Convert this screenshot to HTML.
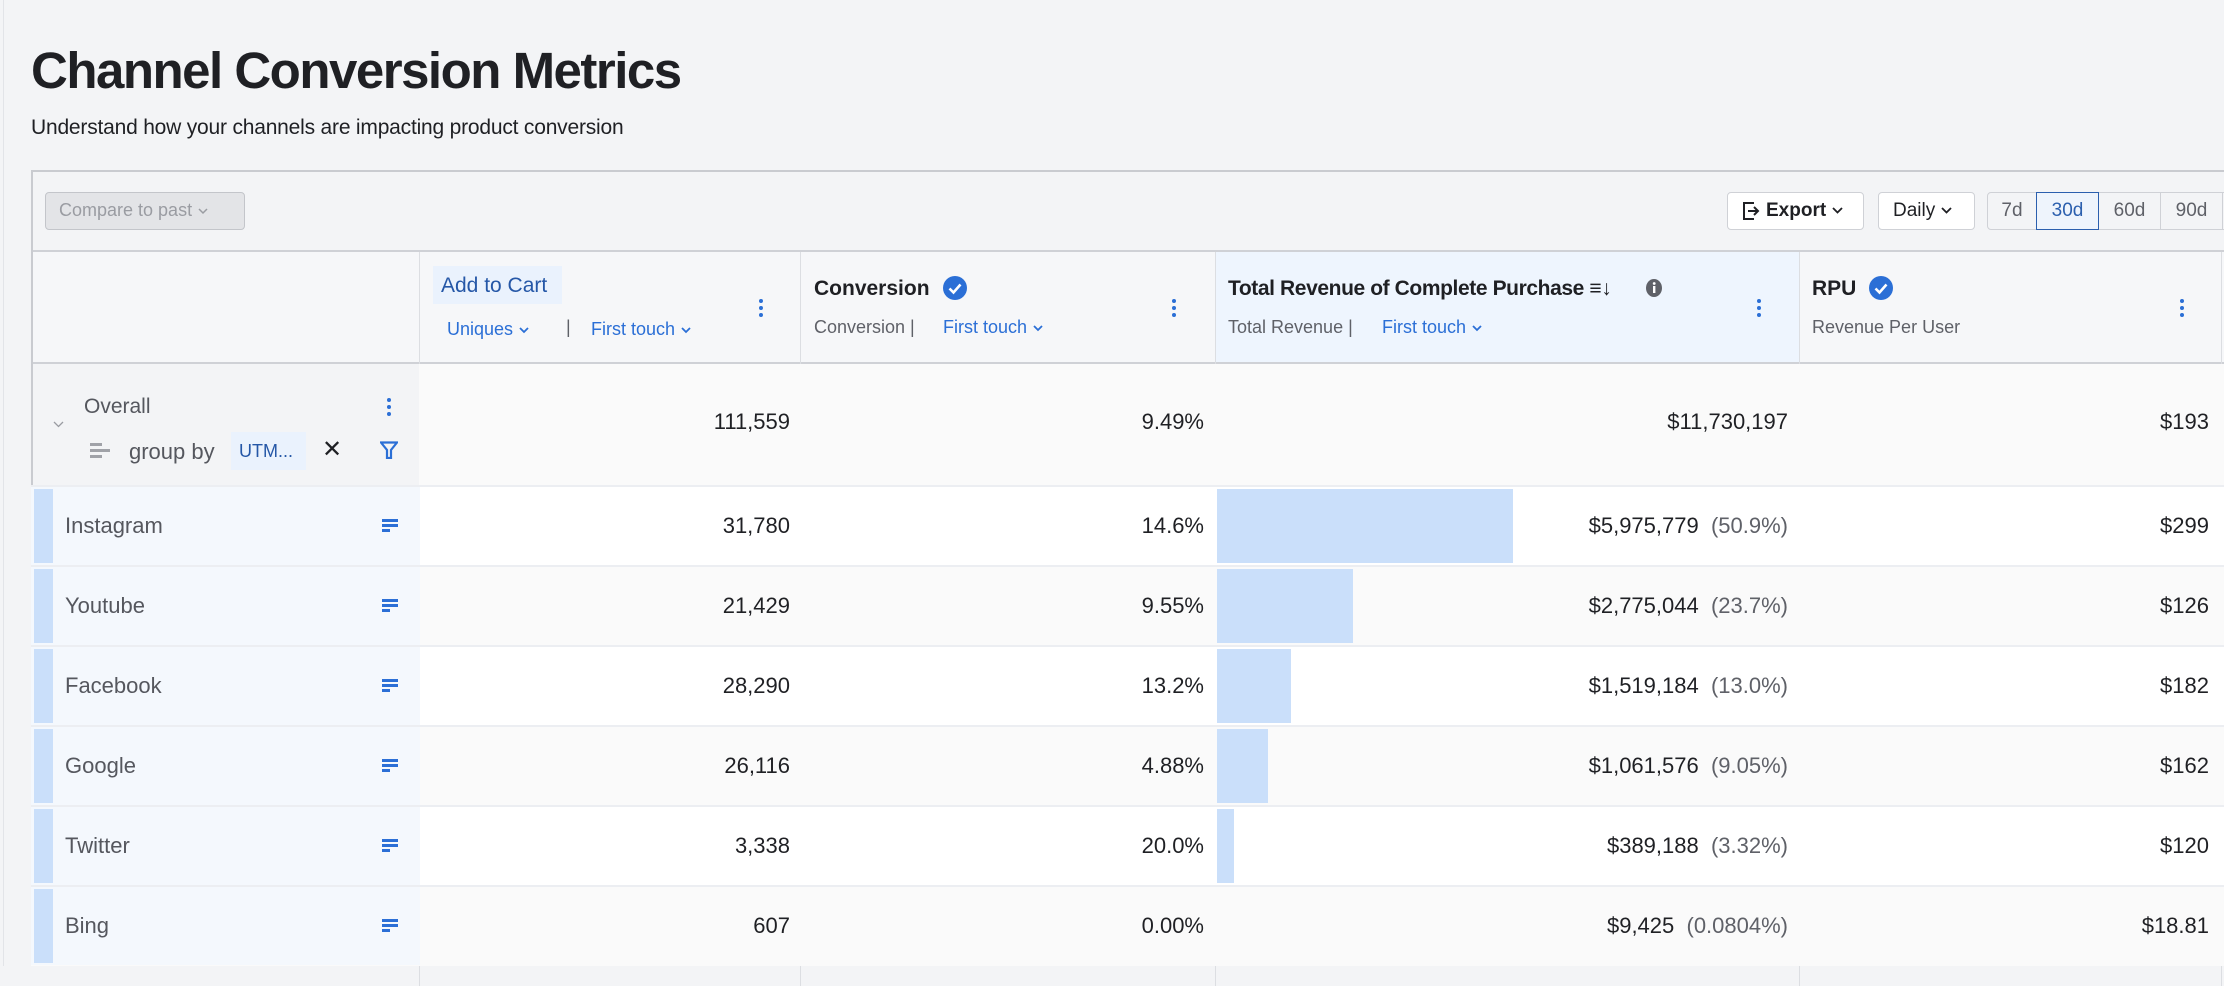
<!DOCTYPE html>
<html><head><meta charset="utf-8"><style>
*{box-sizing:border-box;margin:0;padding:0}
body{width:2224px;height:966px;overflow:hidden;background:#f3f4f6;font-family:"Liberation Sans",sans-serif;color:#1f2024;position:relative}
.a{position:absolute;white-space:nowrap}
.blue{color:#2b6fd6}
.g{color:#5f6168}
.kb{position:absolute;width:4px}
.kb i{display:block;width:4px;height:4px;border-radius:2px;background:#2b6fd6;margin-bottom:3px}
.btn{position:absolute;top:192px;height:38px;border:1.5px solid #cfd1d6;border-radius:4px;background:#fff;font-size:19px;line-height:35px}
.seg{position:absolute;top:192px;height:38px;border:1.5px solid #cfd1d6;background:#f3f4f6;font-size:19px;line-height:35px;color:#5f6168;text-align:center}
.row{position:absolute;left:31px;width:2193px;height:80px;border-top:2px solid #eceef2}
.num{position:absolute;font-size:22px;text-align:right;top:26px}
.lc{position:absolute;left:0;top:0;width:389px;height:78px;background:#f4f8fd}
.lc b{position:absolute;left:3px;top:2px;width:19px;height:74px;background:#cadffa}
.lc span{position:absolute;left:34px;top:26px;font-size:22px;color:#55575e}
.ic{position:absolute;left:351px;top:32px;width:16px}
.ic i{display:block;height:3px;background:#2b6fd6;margin-bottom:2px}
.bar{position:absolute;left:1186px;top:2px;height:74px;background:#cadffa}
.cv{display:inline-block;vertical-align:middle;margin-left:6px}
</style></head><body>
<div class="a" style="left:3px;top:0;width:1px;height:966px;background:#e2e4e8"></div>
<div class="a" style="left:31px;top:41px;font-size:51px;font-weight:bold;letter-spacing:-1.5px;color:#1f2024">Channel Conversion Metrics</div>
<div class="a" style="left:31px;top:116px;font-size:21px;letter-spacing:-0.2px">Understand how your channels are impacting product conversion</div>

<div class="a" style="left:31px;top:170px;width:2193px;height:796px;border-top:2px solid #c9cbd0;border-left:2px solid #c9cbd0;background:#f3f4f6"></div>
<div class="a" style="left:45px;top:192px;width:200px;height:38px;border:1.5px solid #c3c5ca;border-radius:4px;background:#e3e4e7;color:#9a9ca2;font-size:18px;line-height:35px;padding-left:13px">Compare to past<svg class="cv" width="10" height="7" viewBox="0 0 10 7"><path d="M1 1l4 4 4-4" fill="none" stroke="#9a9ca2" stroke-width="1.5"/></svg></div>
<div class="btn" style="left:1727px;width:137px;padding-left:38px;font-weight:bold">Export<svg class="cv" width="11" height="8" viewBox="0 0 11 8"><path d="M1 1l4.5 4.5L10 1" fill="none" stroke="#1f2024" stroke-width="1.8"/></svg></div>
<svg class="a" style="left:1742px;top:201px" width="18" height="20" viewBox="0 0 18 20"><path d="M12 2H2v16h10M6 10h10M12 6l4 4-4 4" fill="none" stroke="#1f2024" stroke-width="2"/></svg>
<div class="btn" style="left:1878px;width:97px;padding-left:14px">Daily<svg class="cv" width="11" height="8" viewBox="0 0 11 8"><path d="M1 1l4.5 4.5L10 1" fill="none" stroke="#1f2024" stroke-width="1.8"/></svg></div>
<div class="seg" style="left:1987px;width:50px;border-radius:4px 0 0 4px">7d</div>
<div class="seg" style="left:2098px;width:63px">60d</div>
<div class="seg" style="left:2160px;width:63px">90d</div>
<div class="seg" style="left:2222px;width:40px"></div>
<div class="seg" style="left:2036px;width:63px;border-color:#2b5fae;color:#2b5fae;background:#eef4fc">30d</div>

<!-- header -->
<div class="a" style="left:33px;top:250px;width:2191px;height:114px;background:#f6f7f9;border-top:2px solid #cfd1d6;border-bottom:2px solid #cfd1d6"></div>
<div class="a" style="left:1215px;top:252px;width:584px;height:110px;background:#eef5fe"></div>
<div class="a" style="left:419px;top:252px;width:1px;height:734px;background:#dcdee2"></div>
<div class="a" style="left:800px;top:252px;width:1px;height:734px;background:#dcdee2"></div>
<div class="a" style="left:1215px;top:252px;width:1px;height:734px;background:#dcdee2"></div>
<div class="a" style="left:1799px;top:252px;width:1px;height:734px;background:#dcdee2"></div>
<div class="a" style="left:2221px;top:252px;width:1px;height:734px;background:#dcdee2"></div>

<div class="a" style="left:433px;top:266px;width:129px;height:38px;background:#eaf2fd"></div>
<div class="a" style="left:441px;top:274px;font-size:21px;color:#2557a7">Add to Cart</div>
<div class="a blue" style="left:447px;top:319px;font-size:18px">Uniques<svg class="cv" width="10" height="7" viewBox="0 0 10 7"><path d="M1 1l4 4 4-4" fill="none" stroke="#2b6fd6" stroke-width="1.8"/></svg></div>
<div class="a" style="left:566px;top:317px;font-size:18px;color:#5f6168">|</div>
<div class="a blue" style="left:591px;top:319px;font-size:18px">First touch<svg class="cv" width="10" height="7" viewBox="0 0 10 7"><path d="M1 1l4 4 4-4" fill="none" stroke="#2b6fd6" stroke-width="1.8"/></svg></div>
<div class="kb" style="left:759px;top:299px"><i></i><i></i><i></i></div>

<div class="a" style="left:814px;top:277px;font-size:21px;font-weight:bold">Conversion</div>
<svg class="a" style="left:942px;top:275px" width="26" height="26" viewBox="0 0 26 26"><circle cx="13" cy="13" r="12" fill="#2b6fd6"/><path d="M7.5 13.5l4 4 7-8" fill="none" stroke="#fff" stroke-width="2.6"/></svg>
<div class="a g" style="left:814px;top:317px;font-size:18px">Conversion |</div>
<div class="a blue" style="left:943px;top:317px;font-size:18px">First touch<svg class="cv" width="10" height="7" viewBox="0 0 10 7"><path d="M1 1l4 4 4-4" fill="none" stroke="#2b6fd6" stroke-width="1.8"/></svg></div>
<div class="kb" style="left:1172px;top:299px"><i></i><i></i><i></i></div>

<div class="a" style="left:1228px;top:277px;font-size:21px;font-weight:bold;letter-spacing:-0.4px">Total Revenue of Complete Purchase <span style="font-weight:normal">≡↓</span></div>
<svg class="a" style="left:1645px;top:278px" width="18" height="20" viewBox="0 0 18 20"><ellipse cx="9" cy="10" rx="8" ry="9" fill="#5f6168"/><rect x="8" y="8" width="2.4" height="7" fill="#fff"/><circle cx="9.2" cy="5.5" r="1.4" fill="#fff"/></svg>
<div class="a g" style="left:1228px;top:317px;font-size:18px">Total Revenue |</div>
<div class="a blue" style="left:1382px;top:317px;font-size:18px">First touch<svg class="cv" width="10" height="7" viewBox="0 0 10 7"><path d="M1 1l4 4 4-4" fill="none" stroke="#2b6fd6" stroke-width="1.8"/></svg></div>
<div class="kb" style="left:1757px;top:299px"><i></i><i></i><i></i></div>

<div class="a" style="left:1812px;top:277px;font-size:21px;font-weight:bold">RPU</div>
<svg class="a" style="left:1868px;top:275px" width="26" height="26" viewBox="0 0 26 26"><circle cx="13" cy="13" r="12" fill="#2b6fd6"/><path d="M7.5 13.5l4 4 7-8" fill="none" stroke="#fff" stroke-width="2.6"/></svg>
<div class="a g" style="left:1812px;top:317px;font-size:18px">Revenue Per User</div>
<div class="kb" style="left:2180px;top:299px"><i></i><i></i><i></i></div>

<!-- overall -->
<div class="a" style="left:33px;top:364px;width:2191px;height:122px;background:#fafafa"></div>
<div class="a" style="left:33px;top:364px;width:386px;height:122px;background:#f3f4f6"></div>
<svg class="a" style="left:53px;top:421px" width="11" height="8" viewBox="0 0 11 8"><path d="M1 1l4.5 4.5L10 1" fill="none" stroke="#9a9ca2" stroke-width="1.3"/></svg>
<div class="a" style="left:84px;top:395px;font-size:21px;color:#55575e">Overall</div>
<div class="kb" style="left:387px;top:398px"><i></i><i></i><i></i></div>
<div class="a" style="left:90px;top:443px;width:20px"><i style="display:block;height:3px;width:12px;background:#a0a2a8;margin-bottom:3px"></i><i style="display:block;height:3px;width:20px;background:#a0a2a8;margin-bottom:3px"></i><i style="display:block;height:3px;width:12px;background:#a0a2a8"></i></div>
<div class="a" style="left:129px;top:439px;font-size:22px;color:#55575e">group by</div>
<div class="a" style="left:231px;top:432px;width:75px;height:38px;background:#eaf2fd;color:#2557a7;font-size:18px;line-height:38px;padding-left:8px">UTM...</div>
<div class="a" style="left:322px;top:435px;font-size:24px">✕</div>
<svg class="a" style="left:380px;top:441px" width="18" height="18" viewBox="0 0 18 18"><path d="M1 1.5h16L11 9v8H7V9z" fill="none" stroke="#2b6fd6" stroke-width="2.2"/></svg>
<div class="num" style="left:420px;top:409px;width:370px">111,559</div>
<div class="num" style="left:801px;top:409px;width:403px">9.49%</div>
<div class="num" style="left:1213px;top:409px;width:575px">$11,730,197</div>
<div class="num" style="left:1800px;top:409px;width:409px">$193</div>

<div class="row" style="top:485px;background:#fff"><div class="lc"><b></b><span>Instagram</span><div class="ic"><i style="width:16px"></i><i style="width:16px"></i><i style="width:8px"></i></div></div>
<div class="bar" style="width:296px"></div>
<div class="num" style="left:389px;width:370px">31,780</div><div class="num" style="left:770px;width:403px">14.6%</div>
<div class="num" style="left:1182px;width:575px">$5,975,779 <span class="g">&nbsp;(50.9%)</span></div><div class="num" style="left:1769px;width:409px">$299</div></div>

<div class="row" style="top:565px;background:#fafafa"><div class="lc"><b></b><span>Youtube</span><div class="ic"><i style="width:16px"></i><i style="width:16px"></i><i style="width:8px"></i></div></div>
<div class="bar" style="width:136px"></div>
<div class="num" style="left:389px;width:370px">21,429</div><div class="num" style="left:770px;width:403px">9.55%</div>
<div class="num" style="left:1182px;width:575px">$2,775,044 <span class="g">&nbsp;(23.7%)</span></div><div class="num" style="left:1769px;width:409px">$126</div></div>

<div class="row" style="top:645px;background:#fff"><div class="lc"><b></b><span>Facebook</span><div class="ic"><i style="width:16px"></i><i style="width:16px"></i><i style="width:8px"></i></div></div>
<div class="bar" style="width:74px"></div>
<div class="num" style="left:389px;width:370px">28,290</div><div class="num" style="left:770px;width:403px">13.2%</div>
<div class="num" style="left:1182px;width:575px">$1,519,184 <span class="g">&nbsp;(13.0%)</span></div><div class="num" style="left:1769px;width:409px">$182</div></div>

<div class="row" style="top:725px;background:#fafafa"><div class="lc"><b></b><span>Google</span><div class="ic"><i style="width:16px"></i><i style="width:16px"></i><i style="width:8px"></i></div></div>
<div class="bar" style="width:51px"></div>
<div class="num" style="left:389px;width:370px">26,116</div><div class="num" style="left:770px;width:403px">4.88%</div>
<div class="num" style="left:1182px;width:575px">$1,061,576 <span class="g">&nbsp;(9.05%)</span></div><div class="num" style="left:1769px;width:409px">$162</div></div>

<div class="row" style="top:805px;background:#fff"><div class="lc"><b></b><span>Twitter</span><div class="ic"><i style="width:16px"></i><i style="width:16px"></i><i style="width:8px"></i></div></div>
<div class="bar" style="width:17px"></div>
<div class="num" style="left:389px;width:370px">3,338</div><div class="num" style="left:770px;width:403px">20.0%</div>
<div class="num" style="left:1182px;width:575px">$389,188 <span class="g">&nbsp;(3.32%)</span></div><div class="num" style="left:1769px;width:409px">$120</div></div>

<div class="row" style="top:885px;background:#fafafa;height:81px"><div class="lc"><b></b><span>Bing</span><div class="ic"><i style="width:16px"></i><i style="width:16px"></i><i style="width:8px"></i></div></div>
<div class="num" style="left:389px;width:370px">607</div><div class="num" style="left:770px;width:403px">0.00%</div>
<div class="num" style="left:1182px;width:575px">$9,425 <span class="g">&nbsp;(0.0804%)</span></div><div class="num" style="left:1769px;width:409px">$18.81</div></div>
</body></html>
